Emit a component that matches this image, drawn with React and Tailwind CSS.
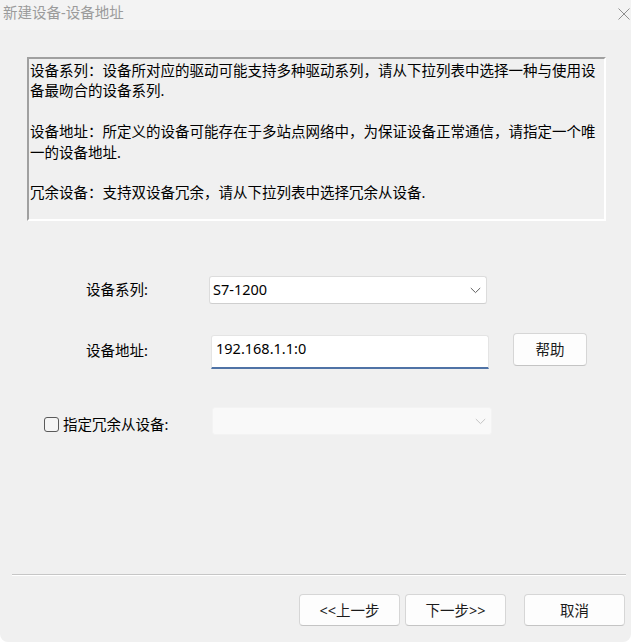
const font = "font-['Noto_Sans','Noto_Sans_CJK_SC',sans-serif]"

function Chevron({ color = '#5f5f5f' }) {
  return (
    <svg width="11" height="7" viewBox="0 0 11 7" fill="none">
      <path d="M0.8 1 L5.5 5.6 L10.2 1" stroke={color} strokeWidth="1" />
    </svg>
  )
}

function Button({ children, size = 'h-[32px] w-[101px]', className = '' }) {
  return (
    <button
      className={`flex items-center justify-center rounded-[4px] border border-[#d6d6d6] border-b-[#c4c4c4] bg-[#fdfdfd] text-[14.5px] leading-none text-[#1b1b1b] ${size} ${className}`}
    >
      {children}
    </button>
  )
}

const info = [
  ['设备系列：设备所对应的驱动可能支持多种驱动系列，请从下拉列表中选择一种与使用设', '备最吻合的设备系列.'],
  ['设备地址：所定义的设备可能存在于多站点网络中，为保证设备正常通信，请指定一个唯', '一的设备地址.'],
  ['冗余设备：支持双设备冗余，请从下拉列表中选择冗余从设备.'],
]

export default function App() {
  return (
    <div className={`flex h-[642px] w-[631px] flex-col overflow-hidden rounded-b-[8px] bg-[#f0f0f0] text-black ${font}`}>
      {/* title bar */}
      <div className="flex h-[30px] shrink-0 items-start justify-between bg-[#f3f3f3] pl-[3px] pr-[1px] pt-[2px]">
        <span className="text-[14.5px] leading-[20px] text-[#9b9b9b]">新建设备-设备地址</span>
        <svg width="12" height="12" viewBox="0 0 12 12" className="mt-[6px]">
          <path d="M0.5 0.5 L11.5 11.5 M11.5 0.5 L0.5 11.5" stroke="#8f8f8f" strokeWidth="1" />
        </svg>
      </div>

      {/* description */}
      <div className="ml-[27px] mt-[27px] flex h-[164px] w-[579px] flex-col gap-[20.4px] overflow-hidden border-2 border-l-[#a0a0a0] border-t-[#a0a0a0] border-b-white border-r-white bg-[#f0f0f0] pl-px pt-px text-[14.5px] leading-[20.4px]">
        {info.map((para) => (
          <div key={para[0]}>
            {para.map((line) => (
              <div key={line} className="whitespace-nowrap">{line}</div>
            ))}
          </div>
        ))}
      </div>

      {/* device series */}
      <div className="mt-[55px] flex h-[28px] items-center">
        <span className="ml-[86px] w-[123px] text-[14.5px]">设备系列:</span>
        <div className="flex h-[28px] w-[278px] items-center justify-between rounded-[3px] border border-[#dcdcdc] border-b-[#cfcfcf] bg-white pl-[3px] pr-[5px]">
          <span className="text-[14.5px]">S7-1200</span>
          <Chevron />
        </div>
      </div>

      {/* device address */}
      <div className="mt-[29px] flex h-[36px] items-start">
        <span className="ml-[86px] mt-[7px] w-[125px] text-[14.5px]">设备地址:</span>
        <div className="mt-[2px] flex h-[34px] w-[278px] items-start rounded-t-[3px] border border-[#e4e4e4] border-b-2 border-b-[#4f73a6] bg-white pl-[4px] pt-[2px]">
          <span className="text-[14.5px]">192.168.1.1:0</span>
        </div>
        <Button size="h-[33px] w-[74px]" className="ml-[24px]">帮助</Button>
      </div>

      {/* redundant device */}
      <div className="mt-[38px] flex h-[28px] items-start">
        <label className="ml-[44px] mt-[10px] flex w-[168px] items-center gap-[4px]">
          <span className="h-[15px] w-[15px] rounded-[3px] border border-[#5a5a5a] bg-[#f5f5f5]" />
          <span className="text-[14.5px] leading-[15px]">指定冗余从设备:</span>
        </label>
        <div className="flex h-[28px] w-[280px] items-center justify-end rounded-[3px] border border-[#f3f3f3] bg-[#f9f9f9] pr-[5px]">
          <Chevron color="#c4c4c4" />
        </div>
      </div>

      <div className="flex-1" />

      {/* separator */}
      <div className="ml-[12px] mr-[5px] border-b border-t border-b-white border-t-[#c6c6c6]" />

      {/* buttons */}
      <div className="mb-[16px] mt-[18px] flex justify-end pr-[6px]">
        <Button>&lt;&lt;上一步</Button>
        <Button className="ml-[5px]">下一步&gt;&gt;</Button>
        <Button className="ml-[18px]">取消</Button>
      </div>
    </div>
  )
}
